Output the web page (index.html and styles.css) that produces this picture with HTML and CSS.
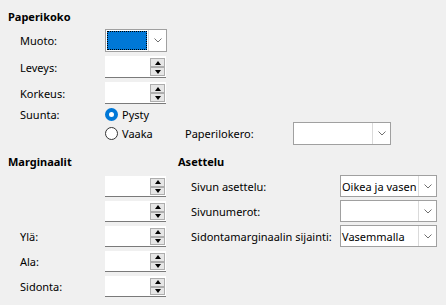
FILE: index.html
```html
<!DOCTYPE html>
<html>
<head>
<meta charset="utf-8">
<link rel="stylesheet" href="styles.css">
</head>
<body>
<div class="page">
  <section class="paper">
    <div class="heading">Paperikoko</div>
    <div class="form">
      <div class="row row-combo">
        <span class="label">Muoto:</span>
        <div class="combo combo-muoto focused">
          <div class="combo-field"><div class="sel"></div></div>
          <div class="combo-btn"><svg width="8" height="5" viewBox="0 0 8 5"><path d="M0.5 0.5 L4 4 L7.5 0.5" fill="none" stroke="#707070" stroke-width="1"/></svg></div>
        </div>
      </div>
      <div class="row row-spin">
        <span class="label">Leveys:</span>
        <div class="spin"><div class="spin-field"></div><div class="spin-btns"><div class="sb up"></div><div class="sb down"></div></div></div>
      </div>
      <div class="row row-spin">
        <span class="label">Korkeus:</span>
        <div class="spin"><div class="spin-field"></div><div class="spin-btns"><div class="sb up"></div><div class="sb down"></div></div></div>
      </div>
      <div class="row row-radio">
        <span class="label">Suunta:</span>
        <label class="radio"><span class="dot checked"></span>Pysty</label>
      </div>
      <div class="row row-radio2">
        <span class="label"></span>
        <label class="radio"><span class="dot"></span>Vaaka</label>
        <span class="tray-label">Paperilokero:</span>
        <div class="combo combo-tray">
          <div class="combo-field"></div>
          <div class="combo-btn"><svg width="8" height="5" viewBox="0 0 8 5"><path d="M0.5 0.5 L4 4 L7.5 0.5" fill="none" stroke="#707070" stroke-width="1"/></svg></div>
        </div>
      </div>
    </div>
  </section>
  <div class="bottom">
    <section class="margins">
      <div class="heading">Marginaalit</div>
      <div class="mform">
        <div class="mrow"><span class="label"></span><div class="spin"><div class="spin-field"></div><div class="spin-btns"><div class="sb up"></div><div class="sb down"></div></div></div></div>
        <div class="mrow"><span class="label"></span><div class="spin"><div class="spin-field"></div><div class="spin-btns"><div class="sb up"></div><div class="sb down"></div></div></div></div>
        <div class="mrow"><span class="label">Ylä:</span><div class="spin"><div class="spin-field"></div><div class="spin-btns"><div class="sb up"></div><div class="sb down"></div></div></div></div>
        <div class="mrow"><span class="label">Ala:</span><div class="spin"><div class="spin-field"></div><div class="spin-btns"><div class="sb up"></div><div class="sb down"></div></div></div></div>
        <div class="mrow"><span class="label">Sidonta:</span><div class="spin"><div class="spin-field"></div><div class="spin-btns"><div class="sb up"></div><div class="sb down"></div></div></div></div>
      </div>
    </section>
    <section class="layout">
      <div class="heading">Asettelu</div>
      <div class="lform">
        <div class="lrow"><span class="llabel">Sivun asettelu:</span>
          <div class="combo combo-l"><div class="combo-field">Oikea ja vasen</div><div class="combo-btn"><svg width="8" height="5" viewBox="0 0 8 5"><path d="M0.5 0.5 L4 4 L7.5 0.5" fill="none" stroke="#707070" stroke-width="1"/></svg></div></div>
        </div>
        <div class="lrow"><span class="llabel">Sivunumerot:</span>
          <div class="combo combo-l"><div class="combo-field"></div><div class="combo-btn"><svg width="8" height="5" viewBox="0 0 8 5"><path d="M0.5 0.5 L4 4 L7.5 0.5" fill="none" stroke="#707070" stroke-width="1"/></svg></div></div>
        </div>
        <div class="lrow"><span class="llabel">Sidontamarginaalin sijainti:</span>
          <div class="combo combo-l"><div class="combo-field">Vasemmalla</div><div class="combo-btn"><svg width="8" height="5" viewBox="0 0 8 5"><path d="M0.5 0.5 L4 4 L7.5 0.5" fill="none" stroke="#707070" stroke-width="1"/></svg></div></div>
        </div>
      </div>
    </section>
  </div>
</div>
</body>
</html>
```

FILE: styles.css
```css
html, body {
  margin: 0;
  padding: 0;
  background: #f0f0f0;
}
body {
  font-family: "Noto Sans", "Open Sans", sans-serif;
  font-size: 11px;
  color: #000;
  width: 446px;
  height: 305px;
  overflow: hidden;
}
.page {
  padding: 9px 0 0 8px;
}
.heading {
  font-weight: bold;
  line-height: 16px;
  height: 16px;
}
.form {
  margin-top: 4px;
  display: flex;
  flex-direction: column;
}
.row {
  display: flex;
  align-items: center;
}
.label {
  width: 97px;
  padding-left: 12px;
  box-sizing: border-box;
  flex: none;
}
.row-combo { height: 23px; }
.row-spin { height: 22px; margin-top: 4px; }
.row-radio { height: 16px; margin-top: 2px; }
.row-radio2 { height: 23px; margin-top: 0; }

/* combo */
.combo {
  display: flex;
  border: 1px solid #a0a0a0;
  background: #fff;
  box-sizing: border-box;
  height: 23px;
}
.combo-field {
  flex: 1;
  padding: 1px;
  display: flex;
  align-items: center;
  overflow: hidden;
  white-space: nowrap;
}
.combo-btn {
  width: 17px;
  border-left: 1px solid #dadada;
  display: flex;
  align-items: center;
  justify-content: center;
  flex: none;
}
.combo-muoto { width: 62px; }
.sel {
  width: 100%;
  height: 100%;
  background: #0078d7;
  outline: 1px dotted #000;
  outline-offset: -1px;
}
.combo-tray {
  width: 98px;
}
.tray-label {
  margin-left: 28px;
  width: 108px;
  flex: none;
}

/* spin */
.spin {
  display: flex;
  width: 61px;
  height: 22px;
  background: #fff;
  border-bottom: 1px solid #7a7a7a;
  box-sizing: border-box;
}
.spin-field { flex: 1; }
.spin-btns {
  width: 15px;
  margin: 2px 1px 1px 0;
  display: flex;
  flex-direction: column;
}
.sb {
  flex: 1;
  border: 1px solid #adadad;
  background: #e6e6e6;
  position: relative;
}
.sb::after {
  content: "";
  position: absolute;
  left: 50%;
  top: 50%;
  width: 0;
  height: 0;
  border-left: 3.5px solid transparent;
  border-right: 3.5px solid transparent;
  transform: translate(-50%, -50%);
}
.sb.up::after { border-bottom: 4px solid #000; }
.sb.down::after { border-top: 4px solid #000; }

/* radio */
.radio {
  display: flex;
  align-items: center;
  gap: 4px;
  width: 52px;
  flex: none;
}
.dot {
  width: 13px;
  height: 13px;
  border-radius: 50%;
  border: 1px solid #333;
  background: #fff;
  box-sizing: border-box;
  flex: none;
}
.dot.checked {
  border: 4px solid #0078d7;
  background: #fff;
}

/* bottom */
.bottom {
  display: flex;
  margin-top: 9px;
}
.margins { width: 170px; flex: none; }
.mform {
  margin-top: 6px;
  display: flex;
  flex-direction: column;
  gap: 4px;
}
.mrow {
  display: flex;
  align-items: center;
  height: 21px;
}
.mrow .spin { height: 21px; }
.layout { flex: 1; }
.lform {
  margin-top: 5px;
  display: flex;
  flex-direction: column;
  gap: 3px;
  padding-left: 13px;
}
.lrow {
  display: flex;
  align-items: center;
  height: 22px;
}
.llabel { width: 149px; flex: none; white-space: nowrap; }
.combo-l { width: 97px; height: 22px; }
.combo-l .combo-field { padding: 0 1px; }
```
